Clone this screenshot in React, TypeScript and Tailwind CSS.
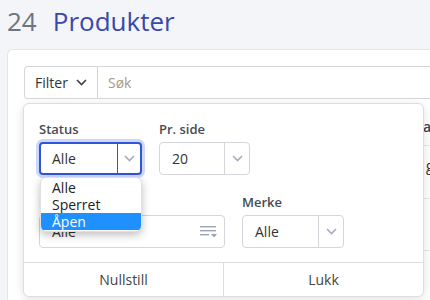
import React from "react";

const font = { fontFamily: '"Open Sans", "Noto Sans", sans-serif' };

function Chevron({ className = "" }: { className?: string }) {
  return (
    <svg width="11" height="7" viewBox="0 0 11 7" className={className} fill="none">
      <path d="M1 1l4.5 4.5L10 1" stroke="currentColor" strokeWidth="1.6" />
    </svg>
  );
}

function FilterListIcon() {
  return (
    <svg width="17" height="12" viewBox="0 0 17 12" fill="none">
      <rect x="0" y="0" width="16" height="1.4" fill="#9aa3b5" />
      <rect x="0" y="4" width="16" height="1.4" fill="#9aa3b5" />
      <rect x="0" y="8" width="9" height="1.4" fill="#9aa3b5" />
      <path d="M11 8h6l-3 3.5z" fill="#9aa3b5" />
    </svg>
  );
}

function Select({
  value,
  width,
  split,
  active = false,
  height = 33,
}: {
  value: string;
  width: string;
  split: string;
  active?: boolean;
  height?: number;
}) {
  return (
    <div
      className={`flex ${width} rounded-[4px] bg-white ${
        active
          ? "border-2 border-[#2f56d8] shadow-[0_0_0_3px_#cdd7fb]"
          : "border border-[#d4d6dc]"
      }`}
      style={{ height }}
    >
      <div className={`${split} flex items-center ${active ? "pl-[11px]" : "pl-[12px]"} text-[14px] text-[#333]`}>
        {value}
      </div>
      <div
        className={`flex flex-1 items-center justify-center border-l ${
          active ? "border-[#2f56d8]" : "border-[#d4d6dc]"
        } text-[#a4abbb]`}
      >
        <Chevron />
      </div>
    </div>
  );
}

export default function App() {
  return (
    <div className="relative flex h-[300px] w-[430px] flex-col overflow-hidden bg-[#f4f5f9]" style={font}>
      <div className="flex h-[49px] items-start pl-[7px] pt-[4px] text-[26px] leading-[35px]">
        <span className="text-[#6d7482]">24</span>
        <span className="ml-[16px] text-[#3949ab]">Produkter</span>
      </div>
      <div className="ml-[7px] flex-1 rounded-tl-[6px] border-l border-t border-[#e3e5ea] bg-white pl-[16px] pt-[16px]">
        <div className="flex h-[33px] rounded-l-[4px] border border-r-0 border-[#d4d6dc]">
          <div className="flex w-[73px] items-center border-r border-[#d4d6dc] pl-[10px] text-[14px] text-[#333]">
            Filter
            <Chevron className="ml-[8px] text-[#3a3f4a]" />
          </div>
          <div className="flex items-center pl-[10px] text-[14px] text-[#a89985]">Søk</div>
        </div>
        <div className="ml-[399px] mt-[10px] flex flex-col text-[14px]">
          <div className="flex h-[37px] items-end border-b border-[#e5e7eb] pb-[8px] font-semibold text-[#444]">
            alt
          </div>
          <div className="flex h-[53px] items-center border-b border-[#e5e7eb] pb-[14px] text-[#333]">
            <span className="mr-[1px] h-[14px] w-[1px] bg-[#5aa0e0]" />
            <span className="ml-[2px]">g</span>
          </div>
          <div className="h-[52px] border-b border-[#e5e7eb]" />
        </div>
      </div>

      <div className="absolute left-[23px] top-[103px] flex h-[194px] w-[401px] flex-col rounded-[6px] border border-[#dcdee3] bg-white shadow-[0_2px_10px_rgba(0,0,0,0.12)]">
        <div className="flex flex-1 flex-col pl-[15px] pt-[16px]">
          <div className="flex gap-[17px]">
            <div className="flex flex-col">
              <div className="mb-[4px] text-[13px] font-semibold leading-[18px] text-[#474b54]">Status</div>
              <Select value="Alle" width="w-[103px]" split="w-[76px]" active />
            </div>
            <div className="flex flex-col">
              <div className="mb-[4px] text-[13px] font-semibold leading-[18px] text-[#474b54]">Pr. side</div>
              <Select value="20" width="w-[91px]" split="w-[64px]" />
            </div>
          </div>
          <div className="mt-[18px] flex gap-[17px]">
            <div className="flex flex-col">
              <div className="mb-[4px] text-[13px] font-semibold leading-[18px] text-[#474b54]">Kategori</div>
              <div className="flex h-[33px] w-[186px] items-center justify-between rounded-[4px] border border-[#d4d6dc] pl-[12px] pr-[7px] text-[14px] text-[#333]">
                Alle
                <FilterListIcon />
              </div>
            </div>
            <div className="flex flex-col">
              <div className="mb-[4px] text-[13px] font-semibold leading-[18px] text-[#474b54]">Merke</div>
              <Select value="Alle" width="w-[102px]" split="w-[75px]" height={33} />
            </div>
          </div>
        </div>
        <div className="flex h-[34px] border-t border-[#dcdee3] text-[14px] text-[#444]">
          <div className="flex w-[200px] items-center justify-center border-r border-[#dcdee3]">Nullstill</div>
          <div className="flex flex-1 items-center justify-center">Lukk</div>
        </div>
      </div>

      <div className="absolute left-[40px] top-[177px] flex w-[102px] flex-col overflow-hidden rounded-[6px] border border-[#e0e0e0] bg-white py-[1px] text-[14px] leading-[17px] text-[#222] shadow-[0_3px_8px_rgba(0,0,0,0.25)]">
        <div className="pl-[11px]">Alle</div>
        <div className="pl-[11px]">Sperret</div>
        <div className="bg-[#1e90ff] pl-[11px] text-white">Åpen</div>
      </div>
    </div>
  );
}
